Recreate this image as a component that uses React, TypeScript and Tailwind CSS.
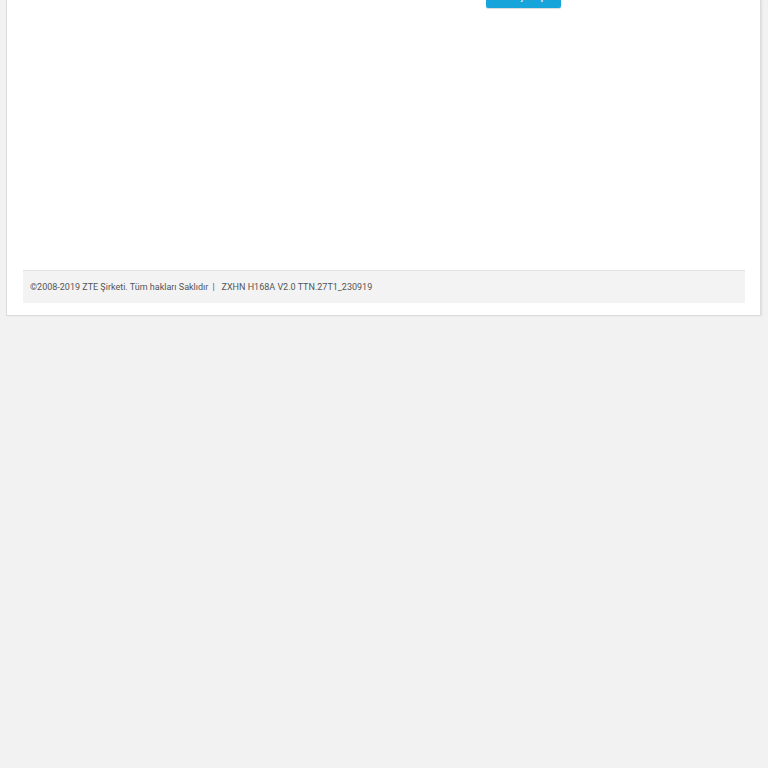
export default function App() {
  return (
    <div className="min-h-[768px] w-full bg-[#f2f2f2] font-['Roboto','Liberation_Sans',sans-serif]">
      <div className="ml-[6px] w-[755px] border-x border-b border-[#dcdcdc] bg-white shadow-[1px_0_2px_rgba(0,0,0,0.08)]">
        <div className="flex h-[262px] flex-col">
          <div className="-mt-[20px] pl-[479px]">
            <button className="h-[28px] w-[75px] rounded-[2px] bg-[#17a4da] pt-[2px] text-[12px] leading-none text-white shadow-[0_1px_1px_rgba(0,0,0,0.15)]">
              Giriş Yap
            </button>
          </div>
        </div>
        <div className="px-[16px] pb-[12px] pt-[8px]">
          <div className="flex h-[33px] w-[722px] items-center border-t border-[#e2e2e2] bg-[#f3f3f3] px-[7px] pt-[2px] text-[9px] text-[#555]">
            <span>©2008-2019 ZTE Şirketi. Tüm hakları Saklıdır</span>
            <span className="mx-[4px]">|</span>
            <span className="ml-[3px]">ZXHN H168A V2.0 TTN.27T1_230919</span>
          </div>
        </div>
      </div>
    </div>
  );
}
